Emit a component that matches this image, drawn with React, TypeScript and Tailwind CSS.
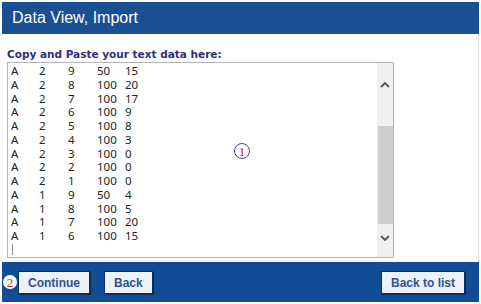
import React from 'react';

// rows pasted into the import box
const rows: string[][] = [
  ['A', '2', '9', '50', '15'],
  ['A', '2', '8', '100', '20'],
  ['A', '2', '7', '100', '17'],
  ['A', '2', '6', '100', '9'],
  ['A', '2', '5', '100', '8'],
  ['A', '2', '4', '100', '3'],
  ['A', '2', '3', '100', '0'],
  ['A', '2', '2', '100', '0'],
  ['A', '2', '1', '100', '0'],
  ['A', '1', '9', '50', '4'],
  ['A', '1', '8', '100', '5'],
  ['A', '1', '7', '100', '20'],
  ['A', '1', '6', '100', '15'],
];

const Marker: React.FC<{ n: string; className?: string }> = ({ n, className }) => (
  <span
    className={`flex items-center justify-center rounded-full font-['Liberation_Serif',serif] text-[13px] leading-none text-[#c8262a] ${className ?? ''}`}
  >
    {n}
  </span>
);

const FooterButton: React.FC<{ label: string }> = ({ label }) => (
  <button className="h-[23px] px-[9px] bg-[#eef2f8] border border-[#0b2c66] shadow-[1px_1px_0_#0a255a] font-['Liberation_Sans',Arial,sans-serif] text-[12px] font-bold text-[#2b5490]">
    {label}
  </button>
);

const App: React.FC = () => {
  return (
    <div className="w-[481px] h-[304px] bg-white px-[2px] pt-[2px] flex flex-col font-['Liberation_Sans',Arial,sans-serif]">
      <div className="h-[32px] bg-[#1a4f94] flex items-center pl-[10px] text-white text-[16px]">
        Data View, Import
      </div>

      <div className="flex-1 border-r border-[#dcdcdc] pl-[5px] pt-[13px]">
        <div className="font-['DejaVu_Sans',Verdana,sans-serif] text-[10.5px] font-bold leading-[14px] text-[#30307a]">
          Copy and Paste your text data here:
        </div>

        <div className="relative mt-[1px] w-[387px] h-[196px] border border-[#b4b4b4] bg-white flex">
          <div className="flex-1 pl-[3px] pt-[1px] font-['Noto_Sans',sans-serif] text-[11.5px] leading-[13.75px] text-[#222]">
            {rows.map((r, i) => (
              <div key={i} className="grid grid-cols-[28px_29px_29px_28px_auto]">
                {r.map((c, j) => (
                  <span key={j}>{c}</span>
                ))}
              </div>
            ))}
            <div className="ml-[1px] mt-[1px] w-px h-[11px] bg-[#888]" />
          </div>

          {/* scrollbar */}
          <div className="w-[16px] bg-[#f0f0f0] flex flex-col items-center">
            <svg width="12" height="8" viewBox="0 0 12 8" className="mt-[18px]">
              <path d="M2 6 L6 2 L10 6" fill="none" stroke="#555" strokeWidth="1.8" />
            </svg>
            <div className="mt-[37px] w-[15px] h-[98px] bg-[#cdcdcd]" />
            <svg width="12" height="8" viewBox="0 0 12 8" className="mt-[10px]">
              <path d="M2 2 L6 6 L10 2" fill="none" stroke="#555" strokeWidth="1.8" />
            </svg>
          </div>

          <Marker
            n="1"
            className="absolute left-[226px] top-[80px] w-[16px] h-[16px] border border-[#3d4b8c] bg-white"
          />
        </div>
      </div>

      <div className="h-[40px] mb-[2px] bg-[#124c95] flex items-center pl-[1px] pr-[14px]">
        <Marker n="2" className="w-[14px] h-[14px] bg-white" />
        <div className="ml-[1px]">
          <FooterButton label="Continue" />
        </div>
        <div className="ml-[14px]">
          <FooterButton label="Back" />
        </div>
        <div className="ml-auto">
          <FooterButton label="Back to list" />
        </div>
      </div>
    </div>
  );
};

export default App;
